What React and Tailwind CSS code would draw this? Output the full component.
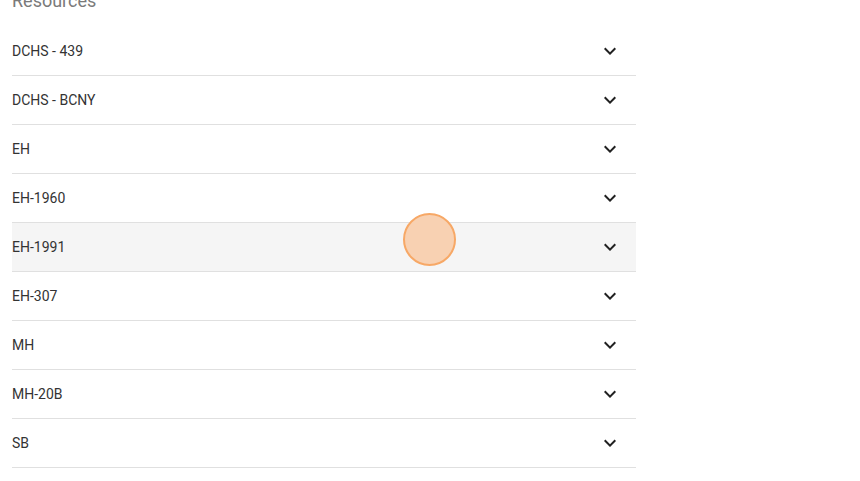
import React from "react";

const resources = [
  "DCHS - 439",
  "DCHS - BCNY",
  "EH",
  "EH-1960",
  "EH-1991",
  "EH-307",
  "MH",
  "MH-20B",
  "SB",
];

function ExpandMore() {
  return (
    <svg width="24" height="24" viewBox="0 0 24 24" className="fill-[#212121]">
      <path d="M16.59 8.59 12 13.17 7.41 8.59 6 10l6 6 6-6z" />
    </svg>
  );
}

export default function App() {
  return (
    <div className="relative min-h-screen bg-white overflow-hidden font-['Roboto','Liberation_Sans',sans-serif]">
      <div className="w-[636px] pl-3">
        <h2 className="-mt-[13px] mb-[12px] text-lg leading-7 text-[#7a7a7a]">Resources</h2>
        <div>
          {resources.map((name) => (
            <div
              key={name}
              className={`flex h-[49px] items-center justify-between border-b border-[#e0e0e0] pr-[14px] ${
                name === "EH-1991" ? "bg-[#f5f5f5]" : ""
              }`}
            >
              <span className="text-sm text-[#333333]">{name}</span>
              <ExpandMore />
            </div>
          ))}
        </div>
      </div>

      {/* click indicator */}
      <div className="absolute left-[403px] top-[213px] h-[53px] w-[53px] rounded-full border-2 border-[#f7a866] bg-[#f8d1b2]" />
    </div>
  );
}
